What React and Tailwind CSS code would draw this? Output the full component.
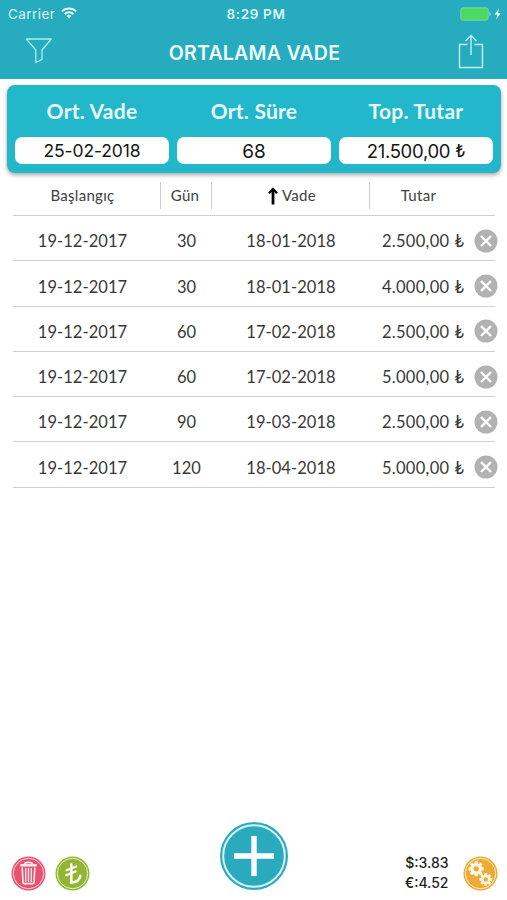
const rows = [
  { start: '19-12-2017', days: 30, due: '18-01-2018', amount: '2.500,00' },
  { start: '19-12-2017', days: 30, due: '18-01-2018', amount: '4.000,00' },
  { start: '19-12-2017', days: 60, due: '17-02-2018', amount: '2.500,00' },
  { start: '19-12-2017', days: 60, due: '17-02-2018', amount: '5.000,00' },
  { start: '19-12-2017', days: 90, due: '19-03-2018', amount: '2.500,00' },
  { start: '19-12-2017', days: 120, due: '18-04-2018', amount: '5.000,00' },
];

const summary = [
  { label: 'Ort. Vade', value: '25-02-2018', font: 'text-[17.5px] tracking-[-0.12px] pt-px' },
  { label: 'Ort. Süre', value: '68', font: 'text-[19px] pt-px' },
  { label: 'Top. Tutar', value: '21.500,00', lira: true, font: 'text-[18.5px] tracking-[-0.3px] pt-px' },
];

function Lira({ className = '' }) {
  return <span className={className}>₺</span>;
}

function StatusBar() {
  return (
    <div className="h-[28px] grid grid-cols-3 items-center pl-2 pr-[5px] text-[13px] text-[#dff8fa] font-['Inter',sans-serif]">
      <div className="flex items-center gap-[5px]">
        <span className="w-[48px] text-[13.5px] tracking-[0.45px]">Carrier</span>
        <svg className="-mt-[3px]" width="16" height="12" viewBox="0 0 16 12" fill="none" stroke="#e6fafc" strokeWidth="1.9">
          <path d="M1 4.3a10 10 0 0 1 14 0" />
          <path d="M3.6 7.1a6.2 6.2 0 0 1 8.8 0" />
          <path d="M8 11.6 5.5 9a3.6 3.6 0 0 1 5 0z" fill="#e6fafc" stroke="none" />
        </svg>
      </div>
      <span className="text-center text-[13.5px] pl-[2px] font-semibold tracking-[0.65px]">8:29 PM</span>
      <svg className="justify-self-end -mt-px" width="42" height="14" viewBox="0 0 42 14">
        <rect x="0.8" y="0.8" width="27.4" height="12.4" rx="2.2" fill="#4bd964" stroke="#7fdcb0" strokeWidth="0.8" />
        <path d="M29.5 5v4c1.6-.4 1.6-3.6 0-4z" fill="#a5e2e8" />
        <path d="M38.8 1.8 34.6 7.6h2.6l-.9 4.6 4.4-6h-2.7z" fill="#effdfe" />
      </svg>
    </div>
  );
}

function NavBar() {
  return (
    <div className="h-[51px] flex items-center justify-between pl-[25px] pr-[23px]">
      <svg className="-mt-[6px]" width="28" height="26" viewBox="0 0 28 26" fill="none" stroke="#a9edf3" strokeWidth="1.3" strokeLinejoin="round">
        <path d="M1.3 1H26.3L17 12v9.3L10.8 24.5V12z" />
      </svg>
      <h1 className="-ml-[2px] text-[19.5px] leading-none font-semibold text-[#effcfd] font-['Inter',sans-serif] tracking-[0.25px]">ORTALAMA VADE</h1>
      <svg className="-mt-[5px]" width="26" height="35" viewBox="0 0 26 35" fill="none" stroke="#c3f1f6" strokeWidth="1.4">
        <path d="M9.5 10.5H1.5V33.5H24.5V10.5H16.5" />
        <path d="M13 21V1.5M7.5 7 13 1.5 18.5 7" />
      </svg>
    </div>
  );
}

function Summary() {
  return (
    <section className="mx-[7px] mt-[6px] h-[88px] w-[494px] rounded-[8px] bg-[#22b7ca] shadow-[0_2px_4px_rgba(0,0,0,0.35)] px-2 grid grid-cols-3 gap-x-2">
      {summary.map((item) => (
        <div key={item.label} className="text-center">
          <div className="h-[52px] pb-px flex items-center justify-center text-[21px] tracking-[0.25px] font-bold text-[#eafbfd]">{item.label}</div>
          <div className={`h-[27px] rounded-[7px] bg-white flex items-center justify-center gap-[5px] leading-none text-[#161616] font-['Inter',sans-serif] ${item.font}`}>
            <span>{item.value}</span>
            {item.lira && <Lira className="text-[17.5px]" />}
          </div>
        </div>
      ))}
    </section>
  );
}

function TableHead() {
  return (
    <div className="mt-[3px] h-[40px] mx-[13px] w-[482px] flex items-center border-b border-[#d0d0d0] text-[15px] tracking-[0.3px] text-[#404040] leading-[27px]">
      <div className="w-[148px] border-r border-[#cccccc] text-center pr-[8px]">Başlangıç</div>
      <div className="w-[51px] border-r border-[#cccccc] text-center pr-[2px]">Gün</div>
      <div className="w-[158px] border-r border-[#cccccc] flex justify-center items-center gap-1 pl-[3px]">
        <svg width="10" height="18" viewBox="0 0 10 18" fill="none" stroke="#000" strokeWidth="2.8">
          <path d="M5 17.5V3" />
          <path d="M1 6.2 5 2 9 6.2" strokeWidth="2.3" />
        </svg>
        Vade
      </div>
      <div className="w-[97px] text-center">Tutar</div>
    </div>
  );
}

function Row({ row }) {
  return (
    <div className="h-[45.3px] mx-[13px] w-[482px] pt-[5px] flex items-center border-b border-[#d0d0d0] text-[16.5px] text-[#383838] tracking-[0.05px]">
      <div className="w-[139px] pt-[2px] text-center">{row.start}</div>
      <div className="w-[69px] pt-[2px] text-center">{row.days}</div>
      <div className="w-[139px] pt-[2px] pl-px text-center">{row.due}</div>
      <div className="w-[104px] pt-[2px] flex justify-end gap-[5px]">
        <span className="tracking-[0.3px]">{row.amount}</span>
        <Lira />
      </div>
      <svg className="ml-[9.5px] -mr-[3px] shrink-0" width="24" height="24" viewBox="0 0 24 24">
        <circle cx="12" cy="12" r="11.5" fill="#b2b2b2" />
        <path d="m7 7 10 10m0-10L7 17" stroke="#fff" strokeWidth="2.4" />
      </svg>
    </div>
  );
}

function Badge({ color, ring, children }) {
  return (
    <svg width="35" height="35" viewBox="0 0 35 35">
      <circle cx="17.5" cy="17.5" r="17" fill={color} />
      <circle cx="17.5" cy="17.5" r="15.2" fill="none" stroke={ring} strokeWidth="1" />
      {children}
    </svg>
  );
}

// Toothed ring, centred on 0,0
function Gear({ x, y, scale }) {
  return (
    <g transform={`translate(${x} ${y}) scale(${scale})`}>
      {[0, 45, 90, 135, 180, 225, 270, 315].map((angle) => (
        <rect key={angle} x="-1.5" y="-7.2" width="3" height="3.6" rx="0.5" fill="#fff8e8" transform={`rotate(${angle})`} />
      ))}
      <circle r="4" fill="none" stroke="#fff8e8" strokeWidth="3" />
    </g>
  );
}

function BottomBar() {
  return (
    <footer className="h-[80px] pl-[10.5px] pr-[9px] grid grid-cols-[1fr_auto_1fr] items-start">
      <div className="flex gap-[9px] pt-[36px]">
        <Badge color="#e9526f" ring="#ffd9e0">
          <g fill="none" stroke="#fff0f2" strokeWidth="1.6">
            <path d="M13.6 8q0-1.6 3.9-1.6T21.4 8" strokeWidth="1.8" />
            <path d="M9.3 9.3h16.4" strokeWidth="2.4" />
            <path d="M11.2 11.5 12 26.4q.1 1.2 1.3 1.2h8.4q1.2 0 1.3-1.2l.8-14.9" />
            <path d="M14.7 12v14M17.5 12v14M20.3 12v14" strokeWidth="1.3" />
          </g>
        </Badge>
        <Badge color="#92b535" ring="#e8f3c8">
          <g fill="none" stroke="#fbfff0" strokeWidth="2.6" strokeLinecap="round">
            <path d="M16.3 8.3v18.2q8-.2 9-6.8" />
            <path d="m11.6 14.2 9.6-3.8M11 19.3l9.6-3.8" strokeWidth="2.2" />
          </g>
        </Badge>
      </div>
      <svg className="mt-px" width="70" height="70" viewBox="0 0 70 70">
        <circle cx="35" cy="35" r="34" fill="#2aabbd" />
        <circle cx="35" cy="35" r="30.8" fill="none" stroke="#d9f5f8" strokeWidth="2" />
        <path d="M35 15v40M15 35h40" stroke="#fff" strokeWidth="5.4" />
      </svg>
      <div className="flex justify-end gap-[14.5px] pt-[36px]">
        <div className="-mt-[3px] text-[14px] leading-[20px] font-medium text-[#1e1e1e] font-['Inter',sans-serif] text-right">
          <div>$:3.83</div>
          <div>€:4.52</div>
        </div>
        <Badge color="#edaa35" ring="#fff0cc">
          <Gear x={13.2} y={12.8} scale={1.05} />
          <Gear x={22.8} y={23.4} scale={0.88} />
        </Badge>
      </div>
    </footer>
  );
}

export default function App() {
  return (
    <div className="w-[507px] h-[900px] overflow-hidden flex flex-col bg-white font-['Lato',sans-serif]">
      <header className="h-[79px] shrink-0 bg-[#26abbf]">
        <StatusBar />
        <NavBar />
      </header>
      <Summary />
      <TableHead />
      <main className="flex-1">
        {rows.map((row, i) => (
          <Row key={i} row={row} />
        ))}
      </main>
      <BottomBar />
    </div>
  );
}
